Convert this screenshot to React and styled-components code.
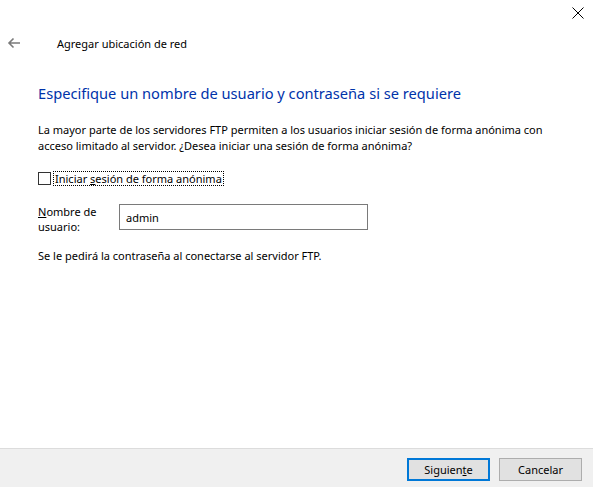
import React from "react";
import styled, { createGlobalStyle } from "styled-components";

const Global = createGlobalStyle`
  html, body { margin: 0; padding: 0; background: #fff; }
  body { font-family: "Noto Sans", "Open Sans", sans-serif; }
`;

export default function App() {
  return (
    <Window>
      <Global />
      <TopBar>
        <CloseBtn aria-label="Cerrar">
          <svg width="12" height="12" viewBox="0 0 12 12">
            <path d="M0.5 0.5L11.5 11.5M11.5 0.5L0.5 11.5" stroke="#000" strokeWidth="1" />
          </svg>
        </CloseBtn>
      </TopBar>
      <NavRow>
        <BackBtn aria-label="Atrás">
          <svg width="14" height="12" viewBox="0 0 14 12">
            <path d="M13 6H2M6.5 1.5L2 6l4.5 4.5" stroke="#7a7a7a" strokeWidth="1.6" fill="none" />
          </svg>
        </BackBtn>
        <Title>Agregar ubicación de red</Title>
      </NavRow>
      <Content>
        <Heading>Especifique un nombre de usuario y contraseña si se requiere</Heading>
        <Para>
          La mayor parte de los servidores FTP permiten a los usuarios iniciar sesión de forma anónima con
          <br />
          acceso limitado al servidor. ¿Desea iniciar una sesión de forma anónima?
        </Para>
        <CheckRow>
          <Box />
          <CheckLabel>
            Iniciar <u>s</u>esión de forma anónima
          </CheckLabel>
        </CheckRow>
        <FieldRow>
          <FieldLabel>
            <u>N</u>ombre de<br />usuario:
          </FieldLabel>
          <Input defaultValue="admin" />
        </FieldRow>
        <Note>Se le pedirá la contraseña al conectarse al servidor FTP.</Note>
      </Content>
      <Footer>
        <Button $primary>
          Siguien<u>t</u>e
        </Button>
        <Button>Cancelar</Button>
      </Footer>
    </Window>
  );
}

const Window = styled.div`
  width: 597px;
  height: 487px;
  display: flex;
  flex-direction: column;
  background: #fff;
  color: #000;
  font-size: 11px;
  overflow: hidden;
`;

const TopBar = styled.div`
  height: 27px;
  display: flex;
  justify-content: flex-end;
  align-items: flex-start;
  padding: 7px 13px 0 0;
  box-sizing: border-box;
`;

const CloseBtn = styled.div`
  width: 12px;
  height: 12px;
  display: flex;
`;

const NavRow = styled.div`
  height: 32px;
  display: flex;
  align-items: center;
  padding-left: 7px;
`;

const BackBtn = styled.div`
  width: 14px;
  height: 12px;
  display: flex;
  margin-right: 36px;
`;

const Title = styled.div`
  font-size: 11px;
  color: #000;
`;

const Content = styled.div`
  flex: 1;
  padding: 0 38px;
`;

const Heading = styled.h1`
  margin: 23px 0 0;
  font-size: 14.65px;
  font-weight: 400;
  line-height: 22px;
  color: #0033aa;
`;

const Para = styled.p`
  margin: 18px 0 0;
  font-size: 11px;
  line-height: 16px;
`;

const CheckRow = styled.div`
  margin-top: 17px;
  display: flex;
  align-items: center;
  height: 15px;
`;

const Box = styled.span`
  width: 11px;
  height: 11px;
  border: 1px solid #333;
  background: #fff;
`;

const CheckLabel = styled.span`
  margin-left: 2px;
  padding: 0 1px;
  border: 1px dotted #000;
  line-height: 13px;
`;

const FieldRow = styled.div`
  margin-top: 18px;
  display: flex;
  align-items: flex-start;
`;

const FieldLabel = styled.div`
  width: 81px;
  line-height: 15px;
`;

const Input = styled.input`
  width: 249px;
  height: 26px;
  box-sizing: border-box;
  border: 1px solid #7a7a7a;
  padding: 0 6px;
  font: inherit;
  font-size: 11px;
  color: #000;
  outline: none;
`;

const Note = styled.p`
  margin: 14px 0 0;
  line-height: 16px;
`;

const Footer = styled.div`
  height: 39px;
  margin-right: 4px;
  border-top: 1px solid #dcdcdc;
  background: #f0f0f0;
  display: flex;
  justify-content: flex-end;
  align-items: flex-start;
  gap: 9px;
  padding: 9px 11px 0 0;
  box-sizing: border-box;
`;

const Button = styled.div`
  width: 83px;
  height: 23px;
  box-sizing: border-box;
  display: flex;
  align-items: center;
  justify-content: center;
  background: #e1e1e1;
  border: ${(p) => (p.$primary ? "2px solid #0078d7" : "1px solid #adadad")};
  font-size: 11px;
  color: #000;
`;
